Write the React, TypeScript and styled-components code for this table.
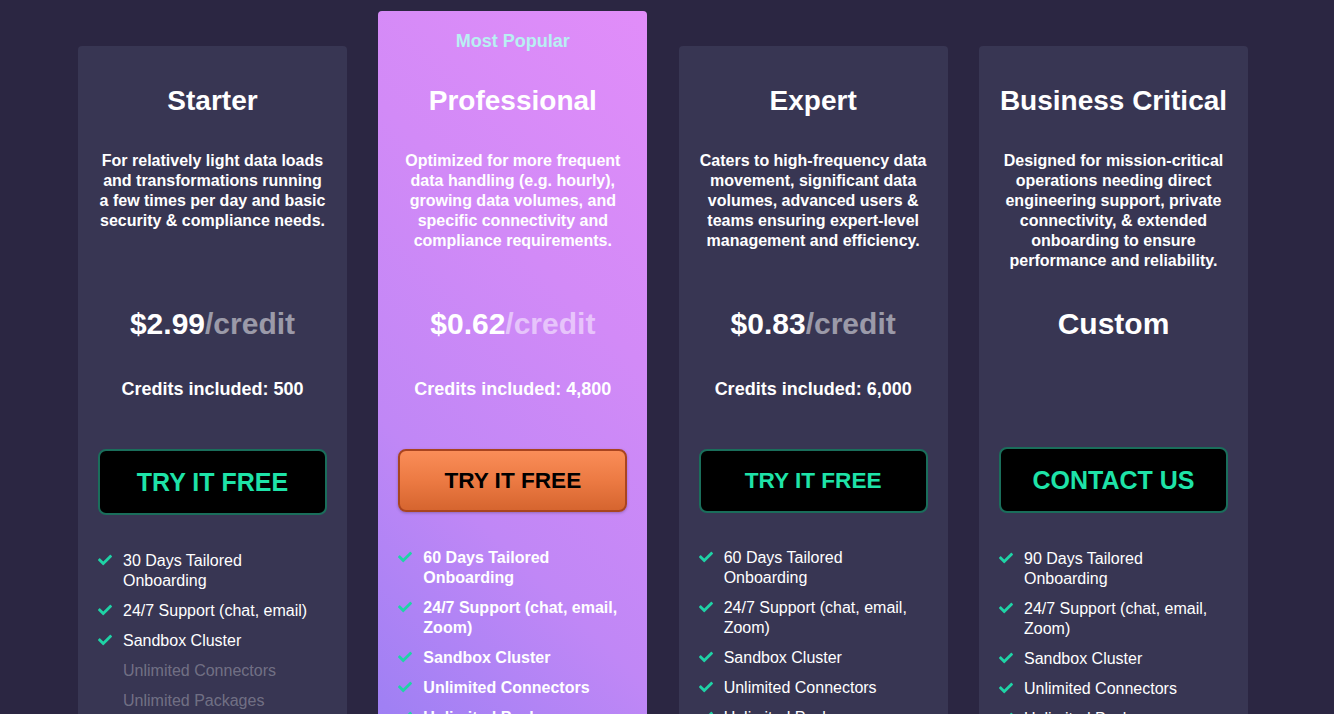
import React from "react";
import styled, { createGlobalStyle, css } from "styled-components";
import { FaCheck } from "react-icons/fa";

const GlobalStyle = createGlobalStyle`
  html, body {
    margin: 0;
    padding: 0;
    background: #2b2642;
    font-family: "Liberation Sans", Arial, sans-serif;
    overflow: hidden;
  }
  * { box-sizing: border-box; }
`;

const Page = styled.div`
  display: flex;
  align-items: flex-start;
  gap: 31.33px;
  padding: 11px 0 0 78px;
  min-height: 714px;
`;

const Card = styled.div<{ $featured?: boolean }>`
  width: 269px;
  flex: 0 0 269px;
  border-radius: 4px;
  display: flex;
  flex-direction: column;
  align-items: stretch;
  min-height: 820px;
  color: #fff;
  ${(p) =>
    p.$featured
      ? css`
          padding: 19px 0 0;
          background: linear-gradient(
            225deg,
            #e18df9 0%,
            #d28af7 33%,
            #c087f6 62%,
            #a080f4 88%,
            #9a7ff3 100%
          );
        `
      : css`
          margin-top: 35px;
          padding: 39px 0 0;
          background: #383653;
        `}
`;

const Badge = styled.div`
  height: 22px;
  line-height: 22px;
  margin-bottom: 33px;
  text-align: center;
  font-size: 18px;
  font-weight: 700;
  color: #b8f0f2;
`;

const Title = styled.h2`
  margin: 0;
  height: 32px;
  line-height: 32px;
  text-align: center;
  font-size: 28px;
  font-weight: 700;
  color: #fff;
  white-space: nowrap;
`;

const Description = styled.p`
  margin: 34px 20px 33px;
  height: 122px;
  text-align: center;
  font-size: 16px;
  line-height: 20px;
  font-weight: 700;
  color: #fff;
`;

const Price = styled.div`
  height: 36px;
  line-height: 36px;
  text-align: center;
  font-size: 30px;
  font-weight: 700;
  color: #fff;
`;

const Unit = styled.span`
  color: rgba(255, 255, 255, 0.5);
`;

const Credits = styled.div`
  margin-top: 37px;
  height: 20px;
  line-height: 20px;
  text-align: center;
  font-size: 18px;
  font-weight: 700;
  color: #fff;
`;

const Button = styled.button<{
  $variant: "green" | "orange";
  $size: number;
  $offset: number;
  $height: number;
}>`
  margin: ${(p) => 50 + p.$offset}px 20px 0;
  height: ${(p) => p.$height}px;
  border-radius: 8px;
  border: 2px solid;
  font-family: "Liberation Sans", Arial, sans-serif;
  font-size: ${(p) => p.$size}px;
  font-weight: 700;
  text-transform: uppercase;
  cursor: pointer;
  ${(p) =>
    p.$variant === "orange"
      ? css`
          background: linear-gradient(to bottom, #fa8d58 0%, #ec7a43 50%, #d6652f 100%);
          border-color: #a9441f;
          color: #000;
          box-shadow: 0 1px 3px rgba(0, 0, 0, 0.25);
        `
      : css`
          background: #000;
          border-color: #1a6e5b;
          color: #1ee3a8;
        `}
`;

const FeatureList = styled.ul<{ $offset: number }>`
  list-style: none;
  margin: ${(p) => 35 + p.$offset}px 0 0;
  padding: 0 20px;
  display: flex;
  flex-direction: column;
  gap: 10px;
`;

const Feature = styled.li<{ $bold?: boolean; $disabled?: boolean }>`
  display: flex;
  align-items: flex-start;
  gap: 10px;
  font-size: 16px;
  line-height: 20px;
  font-weight: ${(p) => (p.$bold ? 700 : 400)};
  color: ${(p) => (p.$disabled ? "rgba(255,255,255,0.3)" : "#fff")};
`;

const CheckSlot = styled.span`
  flex: 0 0 15px;
  height: 20px;
  display: flex;
  align-items: flex-start;
  padding-top: 2px;
  color: #1fd3a6;
`;

const FeatureText = styled.span`
  width: 196px;
`;

type FeatureItem = { text: string; on: boolean };

type Plan = {
  name: string;
  featured?: boolean;
  description: string;
  price?: string;
  custom?: string;
  credits?: string;
  cta: string;
  ctaSize: number;
  btnHeight: number;
  btnOffset: number;
  listOffset: number;
  features: FeatureItem[];
};

const common = (first: string): FeatureItem[] => [
  { text: first, on: true },
  { text: "24/7 Support (chat, email, Zoom)", on: true },
  { text: "Sandbox Cluster", on: true },
  { text: "Unlimited Connectors", on: true },
  { text: "Unlimited Packages", on: true },
  { text: "Private Connectivity", on: true },
];

const plans: Plan[] = [
  {
    name: "Starter",
    description:
      "For relatively light data loads and transformations running a few times per day and basic security & compliance needs.",
    price: "$2.99",
    credits: "Credits included: 500",
    cta: "Try it free",
    ctaSize: 25,
    btnHeight: 66,
    btnOffset: 0,
    listOffset: 1,
    features: [
      { text: "30 Days Tailored Onboarding", on: true },
      { text: "24/7 Support (chat, email)", on: true },
      { text: "Sandbox Cluster", on: true },
      { text: "Unlimited Connectors", on: false },
      { text: "Unlimited Packages", on: false },
      { text: "Private Connectivity", on: false },
    ],
  },
  {
    name: "Professional",
    featured: true,
    description:
      "Optimized for more frequent data handling (e.g. hourly), growing data volumes, and specific connectivity and compliance requirements.",
    price: "$0.62",
    credits: "Credits included: 4,800",
    cta: "Try it free",
    ctaSize: 22.6,
    btnHeight: 63,
    btnOffset: 0,
    listOffset: 1,
    features: common("60 Days Tailored Onboarding"),
  },
  {
    name: "Expert",
    description:
      "Caters to high-frequency data movement, significant data volumes, advanced users & teams ensuring expert-level management and efficiency.",
    price: "$0.83",
    credits: "Credits included: 6,000",
    cta: "Try it free",
    ctaSize: 22.6,
    btnHeight: 64,
    btnOffset: 0,
    listOffset: 0,
    features: common("60 Days Tailored Onboarding"),
  },
  {
    name: "Business Critical",
    description:
      "Designed for mission-critical operations needing direct engineering support, private connectivity, & extended onboarding to ensure performance and reliability.",
    custom: "Custom",
    cta: "Contact us",
    ctaSize: 25,
    btnHeight: 66,
    btnOffset: -2,
    listOffset: 1,
    features: common("90 Days Tailored Onboarding"),
  },
];

export default function App() {
  return (
    <>
      <GlobalStyle />
      <Page>
        {plans.map((plan) => (
          <Card key={plan.name} $featured={plan.featured}>
            {plan.featured && <Badge>Most Popular</Badge>}
            <Title>{plan.name}</Title>
            <Description>{plan.description}</Description>
            <Price>
              {plan.custom ? (
                plan.custom
              ) : (
                <>
                  {plan.price}
                  <Unit>/credit</Unit>
                </>
              )}
            </Price>
            <Credits>{plan.credits ?? ""}</Credits>
            <Button
              $variant={plan.featured ? "orange" : "green"}
              $size={plan.ctaSize}
              $offset={plan.btnOffset}
              $height={plan.btnHeight}
            >
              {plan.cta}
            </Button>
            <FeatureList $offset={plan.listOffset}>
              {plan.features.map((f) => (
                <Feature key={f.text} $bold={plan.featured} $disabled={!f.on}>
                  <CheckSlot>{f.on && <FaCheck size={14} />}</CheckSlot>
                  <FeatureText>{f.text}</FeatureText>
                </Feature>
              ))}
            </FeatureList>
          </Card>
        ))}
      </Page>
    </>
  );
}
